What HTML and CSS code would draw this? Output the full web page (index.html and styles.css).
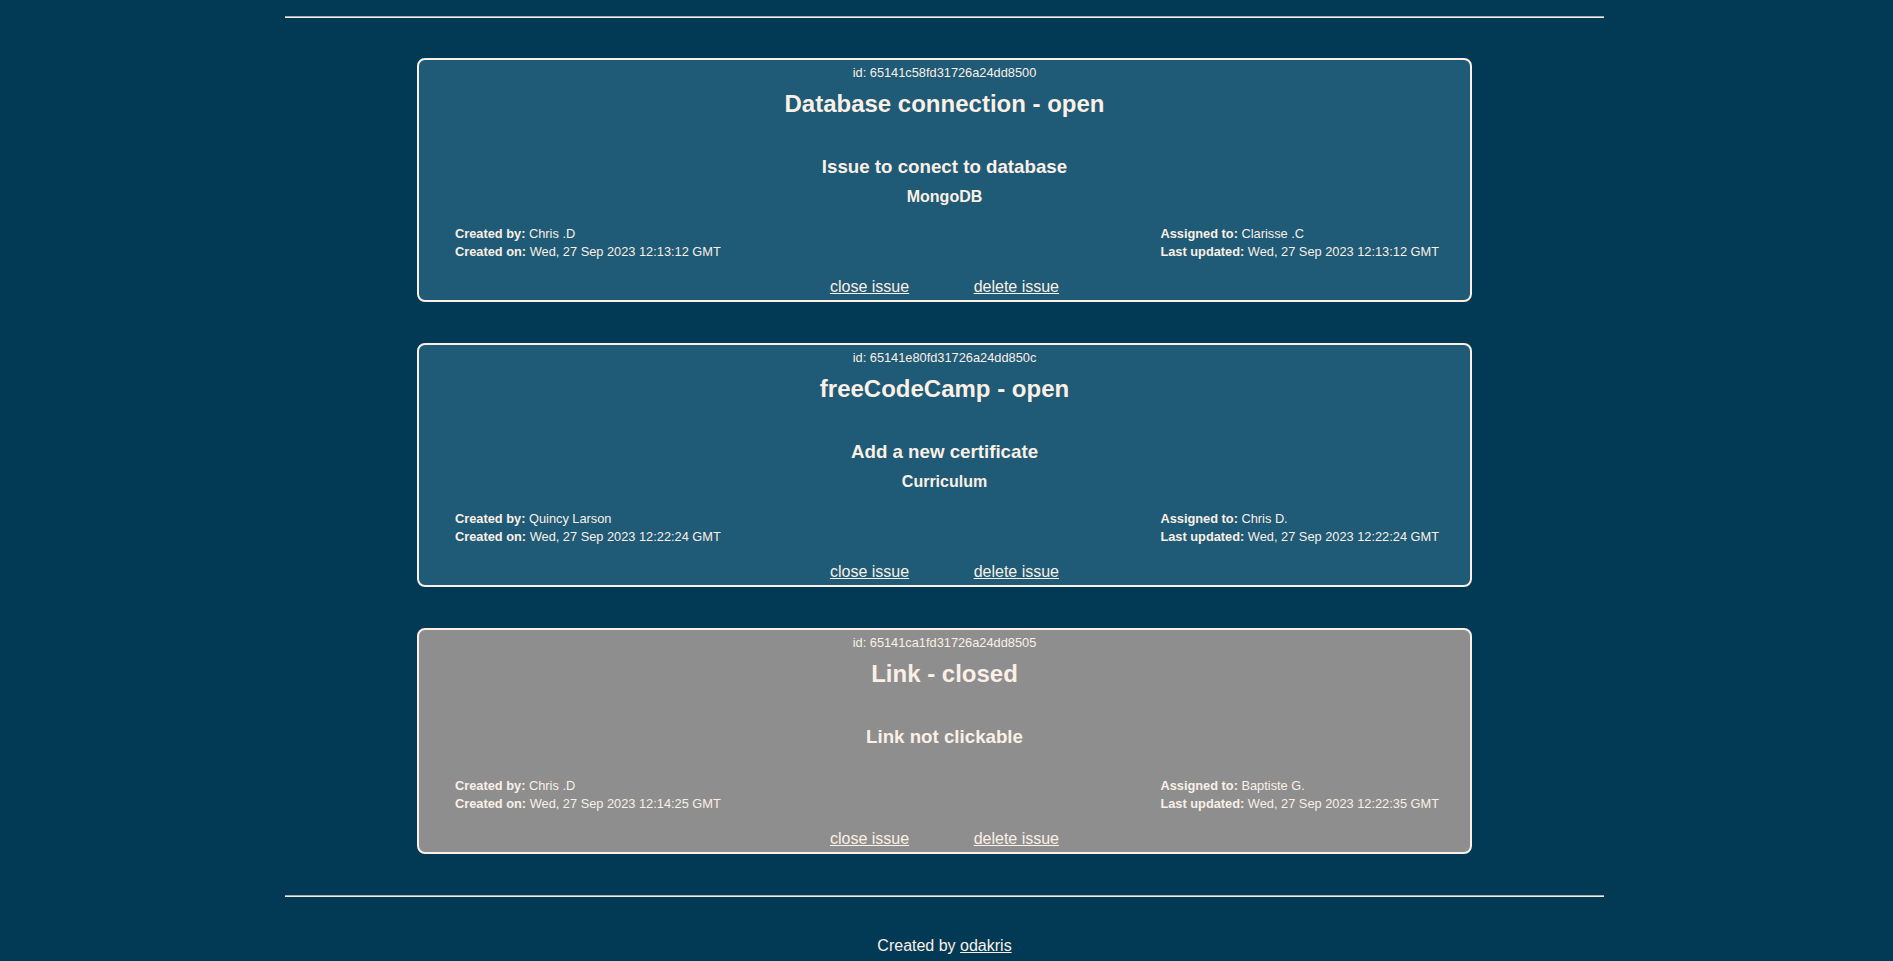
FILE: index.html
```html
<!DOCTYPE html>
<html lang="en">
<head>
<meta charset="utf-8">
<title>Issue Tracker</title>
<link rel="stylesheet" href="styles.css">
</head>
<body>
<hr class="divider divider-top">
<main class="issues">
  <section class="issue issue-open">
    <p class="issue-id">id: 65141c58fd31726a24dd8500</p>
    <h2 class="issue-title">Database connection - open</h2>
    <h3 class="issue-text">Issue to conect to database</h3>
    <p class="issue-project">MongoDB</p>
    <div class="issue-meta">
      <div class="meta-col">
        <div><b>Created by:</b> Chris .D</div>
        <div><b>Created on:</b> Wed, 27 Sep 2023 12:13:12 GMT</div>
      </div>
      <div class="meta-col">
        <div><b>Assigned to:</b> Clarisse .C</div>
        <div><b>Last updated:</b> Wed, 27 Sep 2023 12:13:12 GMT</div>
      </div>
    </div>
    <div class="issue-actions">
      <a href="#" class="action">close issue</a>
      <a href="#" class="action">delete issue</a>
    </div>
  </section>

  <section class="issue issue-open">
    <p class="issue-id">id: 65141e80fd31726a24dd850c</p>
    <h2 class="issue-title">freeCodeCamp - open</h2>
    <h3 class="issue-text">Add a new certificate</h3>
    <p class="issue-project">Curriculum</p>
    <div class="issue-meta">
      <div class="meta-col">
        <div><b>Created by:</b> Quincy Larson</div>
        <div><b>Created on:</b> Wed, 27 Sep 2023 12:22:24 GMT</div>
      </div>
      <div class="meta-col">
        <div><b>Assigned to:</b> Chris D.</div>
        <div><b>Last updated:</b> Wed, 27 Sep 2023 12:22:24 GMT</div>
      </div>
    </div>
    <div class="issue-actions">
      <a href="#" class="action">close issue</a>
      <a href="#" class="action">delete issue</a>
    </div>
  </section>

  <section class="issue issue-closed">
    <p class="issue-id">id: 65141ca1fd31726a24dd8505</p>
    <h2 class="issue-title">Link - closed</h2>
    <h3 class="issue-text">Link not clickable</h3>
    <p class="issue-project"></p>
    <div class="issue-meta">
      <div class="meta-col">
        <div><b>Created by:</b> Chris .D</div>
        <div><b>Created on:</b> Wed, 27 Sep 2023 12:14:25 GMT</div>
      </div>
      <div class="meta-col">
        <div><b>Assigned to:</b> Baptiste G.</div>
        <div><b>Last updated:</b> Wed, 27 Sep 2023 12:22:35 GMT</div>
      </div>
    </div>
    <div class="issue-actions">
      <a href="#" class="action">close issue</a>
      <a href="#" class="action">delete issue</a>
    </div>
  </section>
</main>
<hr class="divider">
<footer class="footer">
  <p>Created by <a href="#" class="footer-link">odakris</a></p>
</footer>
</body>
</html>
```

FILE: styles.css
```css
html {
  background: #023a56;
}

body {
  margin: 0 4px 0 0;
  background: #023a56;
  color: #faf0e6;
  font-family: "Liberation Sans", Arial, sans-serif;
  font-size: 16px;
}

.divider {
  display: block;
  width: 1319px;
  height: 0;
  margin: 0 auto;
  border: none;
  border-top: 1px solid #a9a9a9;
  border-bottom: 1px solid #eeeeee;
}

.divider-top {
  margin-top: 16px;
}

.issues {
  display: flex;
  flex-direction: column;
  align-items: center;
  gap: 41px;
  padding: 40px 0 41px;
}

.issue {
  box-sizing: border-box;
  width: 1055px;
  display: flex;
  flex-direction: column;
  align-items: stretch;
  text-align: center;
  padding: 5px 0 4px;
  border: 2px solid #faf0e6;
  border-radius: 8px;
  background: #1f5a76;
}

.issue-closed {
  background: #8e8e8e;
}

.issue-id {
  margin: 0;
  font-size: 12.8px;
  line-height: 15px;
}

.issue-title {
  margin: 10px 0 0;
  font-size: 24px;
  line-height: 28px;
  font-weight: bold;
}

.issue-text {
  margin: 38px 0 0;
  font-size: 18.72px;
  line-height: 22px;
  font-weight: bold;
}

.issue-project {
  margin: 10px 0 0;
  font-size: 16px;
  line-height: 18px;
  font-weight: bold;
}

.issue-meta {
  display: flex;
  justify-content: space-between;
  margin-top: 19px;
  padding: 0 31px 0 36px;
  text-align: left;
  font-size: 12.8px;
  line-height: 18px;
}

.issue-actions {
  display: flex;
  justify-content: center;
  gap: 64.5px;
  margin-top: 17px;
  line-height: 18px;
}

.action {
  color: #faf0e6;
  text-decoration: underline;
}

.footer {
  padding-top: 40px;
  text-align: center;
}

.footer p {
  margin: 0 0 16px;
}

.footer-link {
  color: #faf0e6;
  text-decoration: underline;
}
```
